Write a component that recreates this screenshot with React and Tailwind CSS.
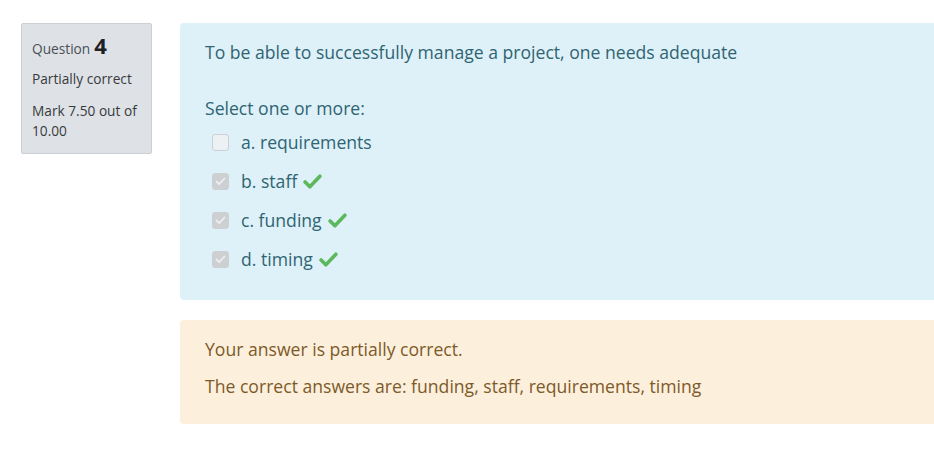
const OPTIONS = [
  { label: 'a. requirements', checked: false, correct: false },
  { label: 'b. staff', checked: true, correct: true },
  { label: 'c. funding', checked: true, correct: true },
  { label: 'd. timing', checked: true, correct: true },
]

function Tick() {
  return (
    <svg width="19" height="15" viewBox="0 0 18 14" className="ml-1.5 shrink-0">
      <path d="M2 7.5 L6.5 12 L16 2" fill="none" stroke="#5cb85c" strokeWidth="3.4" strokeLinecap="round" strokeLinejoin="round" />
    </svg>
  )
}

function Box({ checked }) {
  return (
    <div
      className={`w-[17px] h-[17px] rounded-[3px] border flex items-center justify-center ${
        checked ? 'bg-[#cdd0d3] border-[#cdd0d3]' : 'bg-[#edf1f3] border-[#cbd1d6]'
      }`}
    >
      {checked && (
        <svg width="11" height="9" viewBox="0 0 11 9">
          <path d="M1.5 4.5 L4.2 7.2 L9.5 1.5" fill="none" stroke="#eceef0" strokeWidth="1.8" strokeLinecap="round" strokeLinejoin="round" />
        </svg>
      )}
    </div>
  )
}

export default function App() {
  return (
    <div className="w-[934px] h-[450px] bg-white overflow-hidden font-['Open_Sans',sans-serif]">
      <div className="flex items-start pt-[23px] pl-[21px]">
        {/* Question info */}
        <div className="w-[131px] shrink-0 bg-[#dee2e6] border border-[#cbd0d5] rounded-[2px] px-[10px] pt-[10px] pb-[12px] text-[#373a3c]">
          <div className="flex items-baseline gap-1 leading-none">
            <span className="text-[13.7px] text-[#4a4f55]">Question</span>
            <span className="text-[22px] font-bold text-[#1d2125]">4</span>
          </div>
          <div className="text-[13.7px] mt-[13px]">Partially correct</div>
          <div className="text-[13.7px] mt-[11px] leading-[20px]">Mark 7.50 out of 10.00</div>
        </div>

        <div className="ml-[28px] flex-1 min-w-[760px] flex flex-col gap-[20px]">
          {/* Formulation */}
          <div className="bg-[#def1f8] rounded-l-[4px] pl-[25px] pt-[16px] pb-[21px] text-[#2f6473] text-[17.6px]">
            <p className="leading-[27px]">To be able to successfully manage a project, one needs adequate</p>
            <p className="mt-[29px] leading-[27px]">Select one or more:</p>
            <div className="mt-[1px] flex flex-col">
              {OPTIONS.map((o) => (
                <div key={o.label} className="flex items-center h-[39px]">
                  <div className="ml-[7px] mr-[12px]"><Box checked={o.checked} /></div>
                  <span>{o.label}</span>
                  {o.correct && <Tick />}
                </div>
              ))}
            </div>
          </div>

          {/* Feedback */}
          <div className="bg-[#fcefdc] rounded-l-[4px] pl-[25px] pt-[16px] pb-[24px] text-[#7d5a29] text-[17.6px]">
            <p className="leading-[27px]">Your answer is partially correct.</p>
            <p className="mt-[10px] leading-[27px]">The correct answers are: funding, staff, requirements, timing</p>
          </div>
        </div>
      </div>
    </div>
  )
}
